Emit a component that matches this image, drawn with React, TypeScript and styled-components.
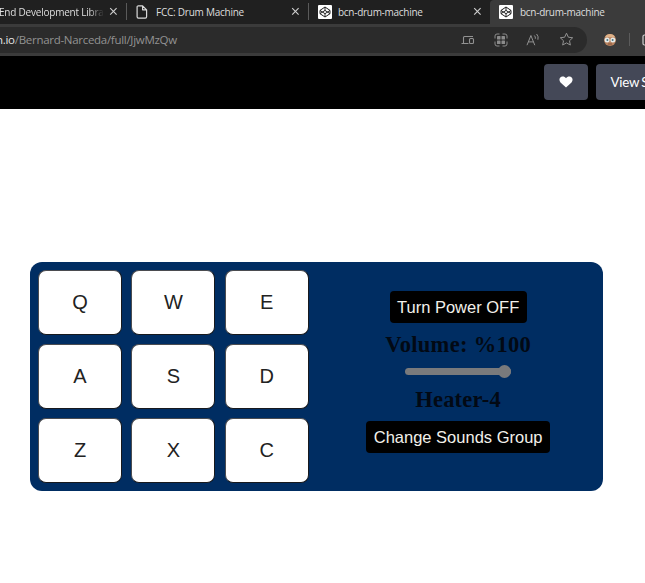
import React from 'react';
import styled, { createGlobalStyle } from 'styled-components';

const GlobalStyle = createGlobalStyle`
  * { box-sizing: border-box; }
  body { margin: 0; background: #fff; overflow: hidden; }
`;

const Page = styled.div`
  width: 645px;
  height: 583px;
  overflow: hidden;
  background: #fff;
`;

const TabStrip = styled.div`
  display: flex;
  height: 24px;
  background: #202020;
`;

const Tab = styled.div<{ $width: number; $active?: boolean }>`
  display: flex;
  flex: none;
  align-items: center;
  width: ${(p) => p.$width}px;
  height: 24px;
  padding: 0 8px 1px 9px;
  background: ${(p) => (p.$active ? '#3b3b3b' : 'transparent')};
  border-radius: ${(p) => (p.$active ? '4px 0 0 0' : '0')};
  overflow: hidden;
`;

const Divider = styled.div<{ $height: number }>`
  flex: none;
  width: 1px;
  height: ${(p) => p.$height}px;
  margin-top: 3px;
  background: #5a5a5a;
`;

const TabTitle = styled.span<{ $shift?: number; $spacing?: number; $faded?: boolean }>`
  flex: 1;
  margin-left: ${(p) => p.$shift ?? 8}px;
  font: 10px/16px 'Open Sans', 'Noto Sans', sans-serif;
  letter-spacing: ${(p) => p.$spacing ?? -0.28}px;
  color: #dedede;
  white-space: nowrap;
  overflow: hidden;
  ${(p) => p.$faded && 'mask-image: linear-gradient(to right, #000 90px, transparent 105px);'}
`;

const Toolbar = styled.div`
  display: flex;
  align-items: center;
  height: 32px;
  padding-bottom: 1px;
  background: #3b3b3b;
  overflow: hidden;
`;

const AddressBar = styled.div`
  display: flex;
  flex: none;
  align-items: center;
  width: 587px;
  height: 26px;
  padding-right: 13px;
  border-radius: 0 13px 13px 0;
  background: #2b2b2b;
`;

const Url = styled.span`
  flex: 1;
  margin-left: -4px;
  font: 11.5px/18px 'Open Sans', 'Noto Sans', sans-serif;
  letter-spacing: -0.29px;
  color: #929292;
  white-space: nowrap;
`;

const Host = styled.span`
  color: #e6e6e6;
`;

const AddressActions = styled.div`
  display: flex;
  gap: 18.7px;
  align-items: center;
`;

const Extensions = styled.div`
  display: flex;
  flex: none;
  gap: 12px;
  align-items: center;
  margin-left: 16px;
`;

const ToolbarDivider = styled.div`
  width: 1px;
  height: 13px;
  background: #5b5b5b;
`;

const PenHeader = styled.header`
  display: flex;
  gap: 8px;
  height: 53px;
  padding: 8px 0 0 543.5px;
  background: #000;
  overflow: hidden;
`;

const HeaderButton = styled.button<{ $width: number }>`
  display: flex;
  flex: none;
  align-items: center;
  justify-content: ${(p) => (p.$width > 50 ? 'flex-start' : 'center')};
  width: ${(p) => p.$width}px;
  height: 36px;
  padding: ${(p) => (p.$width > 50 ? '0 15px' : '0')};
  border: 0;
  border-radius: 4px;
  background: #444857;
  color: #fff;
  font: 13.3px/18px Lato, sans-serif;
  letter-spacing: -0.2px;
  word-spacing: -1px;
  white-space: nowrap;
`;

const Stage = styled.main`
  padding: 153px 0 0 29.5px;
`;

const DrumMachine = styled.section`
  display: flex;
  width: 573px;
  height: 229px;
  padding: 8px 9px 8px 8.5px;
  border-radius: 12px;
  background: #002d62;
`;

const PadGrid = styled.div`
  display: grid;
  grid-template-columns: repeat(3, 84px);
  grid-template-rows: repeat(3, 65px);
  gap: 9px 9.4px;
`;

const Pad = styled.button`
  padding: 0 0 2px;
  border: 1.5px solid;
  border-color: #4b4c50 #17191d #17191d #4b4c50;
  border-radius: 8px;
  background: #fff;
  color: #222;
  font: 20px/24px 'Liberation Sans', Arial, sans-serif;
`;

const Controls = styled.div`
  display: flex;
  flex: 1;
  flex-direction: column;
  align-items: center;
  padding: 21px 0 0 14px;
`;

const ControlButton = styled.button<{ $width: number; $gap?: number }>`
  flex: none;
  width: ${(p) => p.$width}px;
  height: 32px;
  margin-top: ${(p) => p.$gap ?? 0}px;
  padding: 0;
  border: 0;
  border-radius: 4px;
  background: #000;
  color: #f2f0ea;
  font: 16.5px/30px 'Liberation Sans', Arial, sans-serif;
  white-space: nowrap;
`;

const Readout = styled.div<{ $spacing: number }>`
  height: 28px;
  margin-top: 7px;
  color: #020914;
  font: bold 22.5px/30px 'Liberation Serif', 'Times New Roman', serif;
  letter-spacing: ${(p) => p.$spacing}px;
  white-space: nowrap;
`;

const VolumeSlider = styled.input`
  appearance: none;
  width: 106px;
  height: 7px;
  margin: 10px 0 3px;
  border-radius: 4px;
  background: #797a7c;
  &::-webkit-slider-thumb {
    appearance: none;
    width: 13px;
    height: 13px;
    border-radius: 50%;
    background: #797a7c;
  }
`;

const CloseIcon = () => (
  <svg width="9" height="9" viewBox="0 0 9 9" stroke="#d0d0d0" strokeWidth="1.1">
    <path d="M1.2 1.2l6.4 6.4M7.6 1.2L1.2 7.6" />
  </svg>
);

const PageIcon = () => (
  <svg width="12" height="14" viewBox="0 0 12 14" fill="none" stroke="#dadada" strokeWidth="1.2" strokeLinejoin="round">
    <path d="M2.4.8h4.2l4 4v7a1.3 1.3 0 0 1-1.3 1.3H2.4a1.3 1.3 0 0 1-1.3-1.3V2.1A1.3 1.3 0 0 1 2.4.8zM6.6.8v4h4" />
  </svg>
);

const CodePenIcon = () => (
  <svg width="14" height="14" viewBox="0 0 14 14" fill="none" stroke="#222" strokeWidth="1" strokeLinejoin="round">
    <rect width="14" height="14" rx="1" fill="#fff" stroke="none" />
    <path d="M7 2l5 3.4v3.3L7 12 2 8.7V5.4zM2 5.4l5 3.3 5-3.3M2 8.7l5-3.300 5 3.300M7 2v3.400M7 8.700V12" />
  </svg>
);

const DevicesIcon = () => (
  <svg width="14" height="12" viewBox="0 0 14 12" fill="none" stroke="#929292" strokeWidth="1.1">
    <path d="M2.500 9V3.500q0-1 1-1H12M.5 9.500H7.500" />
    <rect x="8.500" y="4.500" width="4" height="5" rx="1" />
  </svg>
);

const AppsIcon = () => (
  <svg width="14" height="14" viewBox="0 0 14 14" fill="none" stroke="#8b8b8b" strokeWidth="1">
    <path d="M5.500 1H3Q1 1 1 3v2.500M8.500 1H11q2 0 2 2v2.500M5.500 13H3q-2 0-2-2V8.500M8.500 13H11q2 0 2-2V8.500" />
    <g fill="#8b8b8b" stroke="none">
      <rect x="3" y="3" width="3.500" height="3.500" rx=".6" />
      <rect x="7.500" y="3" width="3.500" height="3.500" rx=".6" />
      <rect x="3" y="7.500" width="3.500" height="3.500" rx=".6" />
      <rect x="7.500" y="7.500" width="3.500" height="3.500" rx=".6" />
    </g>
  </svg>
);

const ReadAloudIcon = () => (
  <svg width="14" height="14" viewBox="0 0 14 14" fill="none" stroke="#929292" strokeWidth="1">
    <path d="M1 12.200L4.900 2.500 8.800 12.200M2.300 8.900h5.200M8.300 2.500q1.500 1.300 1 3.300M10.600 1q2.300 2.500 1.300 5.700" />
  </svg>
);

const StarIcon = () => (
  <svg width="15" height="15" viewBox="0 0 15 15" fill="none" stroke="#929292" strokeWidth="1" strokeLinejoin="round">
    <path d="M7.500 1.200l1.850 4 4.350.55-3.200 3 .85 4.300-3.850-2.150-3.850 2.150.85-4.300-3.200-3 4.350-.55z" />
  </svg>
);

const AvatarIcon = () => (
  <svg width="14" height="14" viewBox="0 0 14 14">
    <circle cx="7" cy="7" r="6" fill="#b8835f" />
    <path d="M2 4.200Q3.300 1 7 1t5 3.200z" fill="#dfb187" />
    <circle cx="4.100" cy="7" r="2.500" fill="#e7eceb" />
    <circle cx="9.900" cy="7" r="2.500" fill="#e7eceb" />
    <circle cx="4.400" cy="7" r="1" fill="#4a747d" />
    <circle cx="9.600" cy="7" r="1" fill="#4a747d" />
    <path d="M5 11h4" stroke="#87503b" />
  </svg>
);

const PanelIcon = () => (
  <svg width="12" height="12" viewBox="0 0 12 12" fill="none" stroke="#d0d0d0" strokeWidth="1.2">
    <rect x="1" y="1" width="10" height="10" rx="1.5" />
  </svg>
);

const HeartIcon = () => (
  <svg width="14" height="12" viewBox="0 0 14 12" fill="#fff">
    <path d="M7 11.500L1.500 6.400C-.3 4.500.3 1.500 2.400.7 4.100 0 6 .6 7 2.300 8 .6 9.900 0 11.600.7c2.100.8 2.700 3.800.9 5.700z" />
  </svg>
);

const PADS = ['Q', 'W', 'E', 'A', 'S', 'D', 'Z', 'X', 'C'];

export default function App() {
  return (
    <Page>
      <GlobalStyle />
      <TabStrip>
        <Tab $width={126}>
          <TabTitle $shift={-10} $spacing={-0.22} $faded>End Development Libra</TabTitle>
          <CloseIcon />
        </Tab>
        <Divider $height={17} />
        <Tab $width={181}>
          <PageIcon />
          <TabTitle $spacing={-0.24}>FCC: Drum Machine</TabTitle>
          <CloseIcon />
        </Tab>
        <Divider $height={17} />
        <Tab $width={181}>
          <CodePenIcon />
          <TabTitle $shift={6}>bcn-drum-machine</TabTitle>
          <CloseIcon />
        </Tab>
        <Tab $width={155} $active>
          <CodePenIcon />
          <TabTitle $shift={7}>bcn-drum-machine</TabTitle>
        </Tab>
      </TabStrip>
      <Toolbar>
        <AddressBar>
          <Url><Host>n.io</Host>/Bernard-Narceda/full/JjwMzQw</Url>
          <AddressActions>
            <DevicesIcon />
            <AppsIcon />
            <ReadAloudIcon />
            <StarIcon />
          </AddressActions>
        </AddressBar>
        <Extensions>
          <AvatarIcon />
          <ToolbarDivider />
          <PanelIcon />
        </Extensions>
      </Toolbar>
      <PenHeader>
        <HeaderButton $width={44} aria-label="Love"><HeartIcon /></HeaderButton>
        <HeaderButton $width={145}>View Source Code</HeaderButton>
      </PenHeader>
      <Stage>
        <DrumMachine>
          <PadGrid>
            {PADS.map((key) => <Pad key={key}>{key}</Pad>)}
          </PadGrid>
          <Controls>
            <ControlButton $width={137}>Turn Power OFF</ControlButton>
            <Readout $spacing={0.3}>Volume: %100</Readout>
            <VolumeSlider type="range" min="0" max="100" defaultValue="100" aria-label="Volume" />
            <Readout $spacing={0.2}>Heater-4</Readout>
            <ControlButton $width={184} $gap={8}>Change Sounds Group</ControlButton>
          </Controls>
        </DrumMachine>
      </Stage>
    </Page>
  );
}
